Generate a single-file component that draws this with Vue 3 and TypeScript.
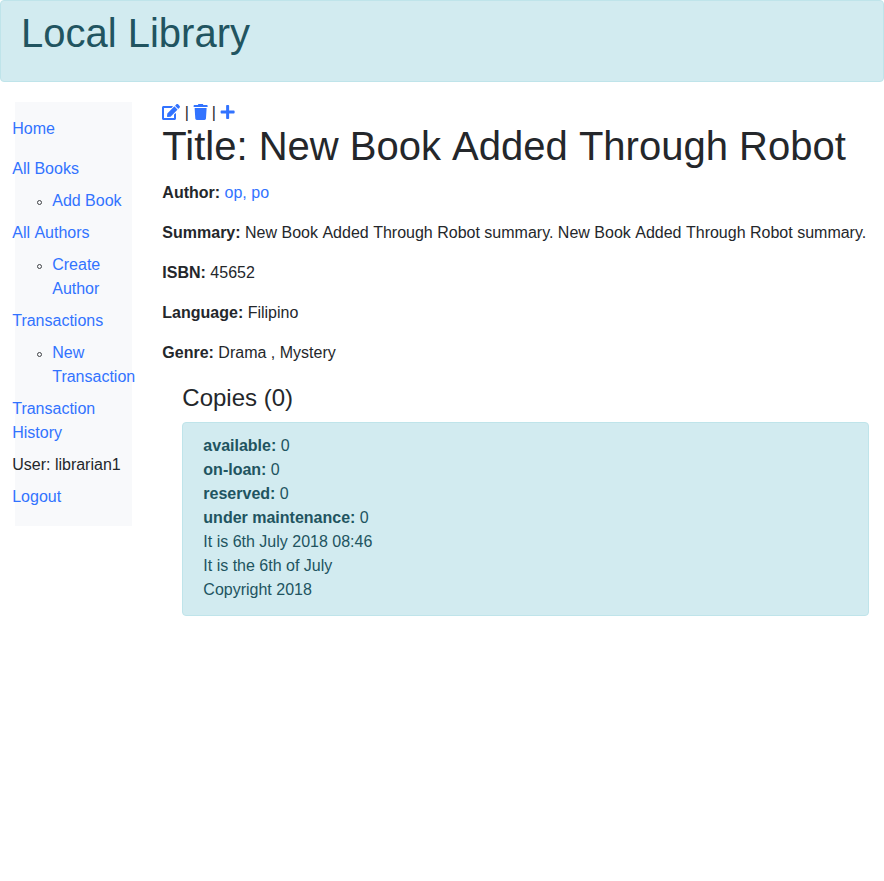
<script setup lang="ts">
import { h } from 'vue'

interface NavItem {
  label: string
  link: boolean
  children?: string[]
}

const nav: NavItem[] = [
  { label: 'All Books', link: true, children: ['Add Book'] },
  { label: 'All Authors', link: true, children: ['Create Author'] },
  { label: 'Transactions', link: true, children: ['New Transaction'] },
  { label: 'Transaction History', link: true },
  { label: 'User: librarian1', link: false },
  { label: 'Logout', link: true },
]

const summary = 'New Book Added Through Robot summary. New Book Added Through Robot summary.'

const fields: { name: string; value: string; link?: boolean }[] = [
  { name: 'Author', value: 'op, po', link: true },
  { name: 'Summary', value: summary },
  { name: 'ISBN', value: '45652' },
  { name: 'Language', value: 'Filipino' },
  { name: 'Genre', value: 'Drama , Mystery' },
]

const copies: { status: string; count: number }[] = [
  { status: 'available', count: 0 },
  { status: 'on-loan', count: 0 },
  { status: 'reserved', count: 0 },
  { status: 'under maintenance', count: 0 },
]

const notes: string[] = ['It is 6th July 2018 08:46', 'It is the 6th of July', 'Copyright 2018']

// Sets each word on its own, so that spaces keep their full width beside capitals.
const Words = (props: { text: string }) =>
  props.text.split(' ').flatMap((word, i) => [i ? ' ' : '', h('span', { class: 'word' }, word)])
Words.props = ['text']
</script>

<template>
  <div class="page">
    <header class="alert banner"><h1>Local Library</h1></header>
    <div class="row">
      <aside class="side-col">
        <nav class="sidebar">
          <p class="home"><a href="#">Home</a></p>
          <ul class="menu">
            <li v-for="item in nav" :key="item.label">
              <a v-if="item.link" href="#"><Words :text="item.label" /></a>
              <span v-else>{{ item.label }}</span>
              <ul v-if="item.children" class="submenu">
                <li v-for="child in item.children" :key="child"><a href="#">{{ child }}</a></li>
              </ul>
            </li>
          </ul>
        </nav>
      </aside>
      <main class="content">
        <div class="actions">
          <a href="#" aria-label="Edit"><svg class="icon wide" viewBox="0 0 576 512"><path d="M402.6 83.2l90.2 90.2c3.8 3.8 3.8 10 0 13.8L274.4 405.6l-92.8 10.3c-12.4 1.4-22.9-9.1-21.5-21.5l10.3-92.8L388.8 83.2c3.8-3.8 10-3.8 13.8 0zm162-22.9l-48.8-48.8c-15.2-15.2-39.9-15.2-55.2 0l-35.4 35.4c-3.8 3.8-3.8 10 0 13.8l90.2 90.2c3.8 3.8 10 3.8 13.8 0l35.4-35.4c15.2-15.3 15.2-40 0-55.2zM384 346.2V448H64V128h229.8c3.2 0 6.2-1.3 8.5-3.5l40-40c7.6-7.6 2.2-20.5-8.5-20.5H48C21.5 64 0 85.5 0 112v352c0 26.5 21.5 48 48 48h352c26.5 0 48-21.5 48-48V306.2c0-10.7-12.9-16-20.5-8.5l-40 40c-2.2 2.3-3.5 5.3-3.5 8.5z" /></svg></a>
          |
          <a href="#" aria-label="Delete"><svg class="icon" viewBox="-20 0 448 512"><path d="M0 84V56c0-13.3 10.7-24 24-24h112l9.4-18.7c4-8.2 12.3-13.3 21.4-13.3h114.3c9.1 0 17.4 5.1 21.5 13.3L312 32h112c13.3 0 24 10.7 24 24v28c0 6.6-5.4 12-12 12H12C5.4 96 0 90.6 0 84zM415 140L394.800 467c-1.600 25.300-22.600 45-47.900 45H101.100c-25.300 0-46.300-19.700-47.900-45L33 140c0-6.600 5.400-12 12-12h358c6.600 0 12 5.400 12 12z" /></svg></a>
          |
          <a href="#" aria-label="Add"><svg class="icon" viewBox="-20 0 448 512"><path d="M416 208H272V64c0-17.67-14.33-32-32-32h-32c-17.67 0-32 14.33-32 32v144H32c-17.67 0-32 14.33-32 32v32c0 17.67 14.33 32 32 32h144v144c0 17.67 14.33 32 32 32h32c17.67 0 32-14.33 32-32V304h144c17.67 0 32-14.33 32-32v-32c0-17.67-14.33-32-32-32z" /></svg></a>
        </div>
        <h1><Words text="Title: New Book Added Through Robot" /></h1>
        <p v-for="field in fields" :key="field.name">
          <strong>{{ field.name }}:</strong>{{ ' ' }}
          <a v-if="field.link" href="#">{{ field.value }}</a>
          <Words v-else :text="field.value" />
        </p>
        <section class="copies">
          <h4>Copies (0)</h4>
          <div class="alert">
            <div v-for="copy in copies" :key="copy.status"><strong>{{ copy.status }}:</strong> {{ copy.count }}</div>
            <div v-for="note in notes" :key="note">{{ note }}</div>
          </div>
        </section>
      </main>
    </div>
  </div>
</template>

<style>
body {
  margin: 0;
  background: #fff;
}
.word {
  display: inline-block;
}
</style>

<style scoped>
.page {
  font-family: "Liberation Sans", Arial, sans-serif;
  font-size: 16px;
  line-height: 24px;
  color: #24272b;
}
.page * {
  box-sizing: border-box;
}
a {
  color: #3273ff;
  text-decoration: none;
}
h1,
h4 {
  margin: 0;
  font-weight: 500;
}
h1 {
  margin-bottom: 15px;
  font-size: 40px;
  line-height: 40px;
}
h4 {
  margin-bottom: 9px;
  font-size: 24px;
  line-height: 1.2;
}
p {
  margin: 0 0 16px;
}
.alert {
  padding: 11px 20px 13px;
  border: 1px solid #bfe4ea;
  border-radius: 4px;
  background: #d2ebf0;
  color: #215460;
}
.banner {
  margin-bottom: 20px;
  padding: 12px 20px 13px;
}
.row {
  display: flex;
  align-items: flex-start;
}
.side-col {
  flex: 0 0 16.6667%;
  min-width: 0;
  padding: 0 15px;
}
.sidebar {
  padding: 15px 0 17px;
  background: #f8f9fb;
}
.home,
.menu {
  margin-left: -2.8px;
}
.menu {
  margin-top: 0;
  margin-bottom: 0;
  padding: 0;
  list-style: none;
}
.menu > li + li,
.submenu {
  margin-top: 8px;
}
.submenu {
  margin-bottom: 0;
  padding-left: 40px;
  list-style: none;
}
.submenu > li::before {
  content: "";
  display: inline-block;
  box-sizing: border-box;
  width: 5px;
  height: 5px;
  margin: 0 10.2px 0 -15.2px;
  border: 1px solid #404346;
  border-radius: 50%;
  vertical-align: 1px;
}
.content {
  flex: 1;
  min-width: 0;
  margin-top: -1px;
  padding: 0 15px;
}
.actions {
  height: 25px;
}
.icon {
  width: 14px;
  height: 16px;
  vertical-align: -2px;
  fill: currentColor;
  overflow: visible;
}
.icon.wide {
  width: 18px;
}
.copies {
  margin: 19px 0 0 20px;
}
</style>
